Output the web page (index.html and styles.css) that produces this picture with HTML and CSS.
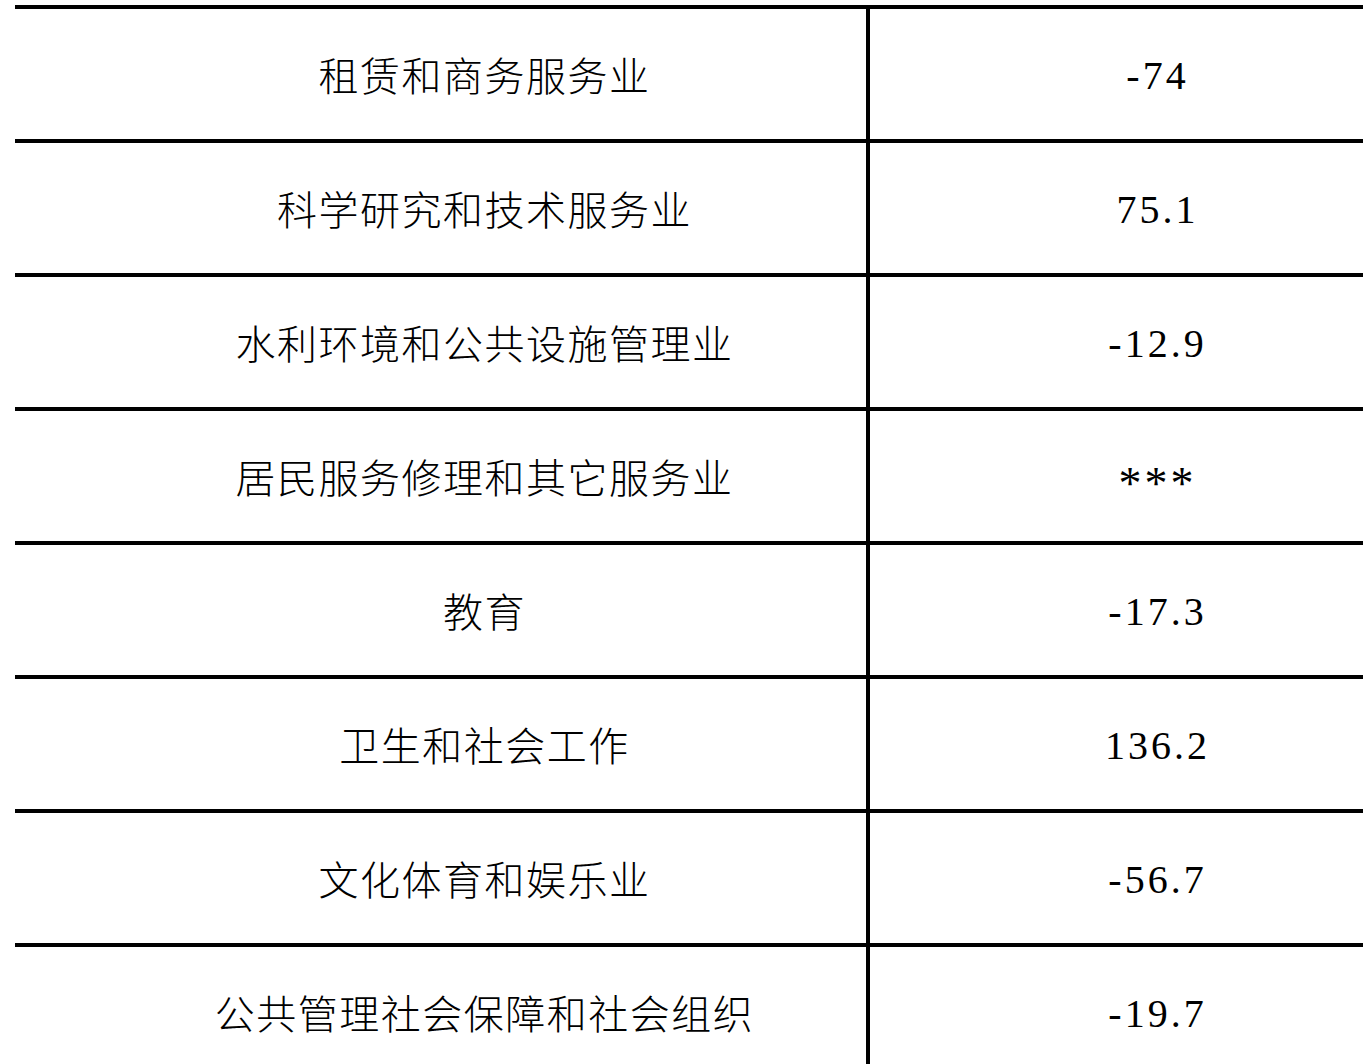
FILE: index.html
```html
<!DOCTYPE html>
<html lang="zh-CN">
<head>
<meta charset="utf-8">
<title>行业数据</title>
<link rel="stylesheet" href="styles.css">
</head>
<body>
<div class="table">
  <div class="row"><div class="name">租赁和商务服务业</div><div class="value">-74</div></div>
  <div class="row"><div class="name">科学研究和技术服务业</div><div class="value">75.1</div></div>
  <div class="row"><div class="name">水利环境和公共设施管理业</div><div class="value">-12.9</div></div>
  <div class="row"><div class="name">居民服务修理和其它服务业</div><div class="value stars">***</div></div>
  <div class="row"><div class="name">教育</div><div class="value">-17.3</div></div>
  <div class="row"><div class="name">卫生和社会工作</div><div class="value">136.2</div></div>
  <div class="row"><div class="name">文化体育和娱乐业</div><div class="value">-56.7</div></div>
  <div class="row"><div class="name">公共管理社会保障和社会组织</div><div class="value">-19.7</div></div>
</div>
</body>
</html>
```

FILE: styles.css
```css
html, body {
  margin: 0;
  padding: 0;
  background: #fff;
}
body {
  overflow: hidden;
  height: 1064px;
}
.table {
  margin: 5px 0 0 15px;
  width: 1348px;
}
.row {
  display: grid;
  grid-template-columns: 855px 1fr;
  height: 130px;
  border-top: 4px solid #000;
}
.name {
  border-right: 4px solid #000;
  display: flex;
  align-items: center;
  justify-content: center;
  padding: 0 0 0 88px;
  font-family: "Noto Sans CJK SC", sans-serif;
  font-weight: 300;
  font-size: 40px;
  letter-spacing: 1.5px;
  color: #000;
}
.value {
  display: flex;
  align-items: center;
  justify-content: center;
  padding: 2px 0 0 82px;
  font-family: "Liberation Serif", serif;
  font-size: 40px;
  letter-spacing: 3px;
  color: #000;
}
.stars {
  font-size: 46px;
  padding-top: 14px;
}
```
